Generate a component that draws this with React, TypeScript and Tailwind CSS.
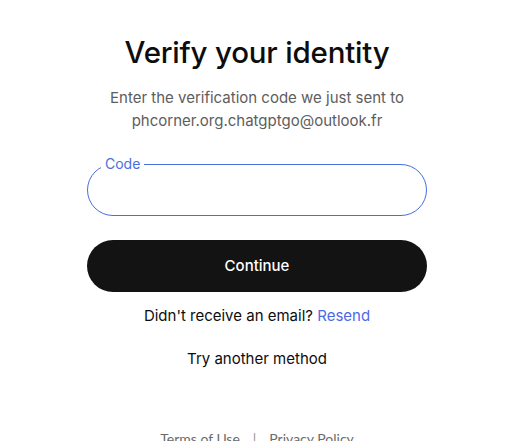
export default function App() {
  return (
    <div className="h-[441px] bg-white pl-[6px] font-['Inter',sans-serif] text-[#0d0d0d] flex flex-col items-center overflow-hidden">
      <h1 className="mt-[34px] text-[29.5px] leading-[36px] font-medium tracking-[-0.2px]">
        Verify your identity
      </h1>
      <p className="mt-[16px] text-center text-[15px] leading-[23px] text-[#5d5d5d]">
        Enter the verification code we just sent to
        <br />
        phcorner.org.chatgptgo@outlook.fr
      </p>

      <div className="relative mt-[32px] w-[340px] h-[52px] shrink-0 rounded-full border border-[#4a6ee0]">
        <span className="absolute left-[13px] -top-[9px] bg-white px-[4px] text-[14px] leading-[16px] text-[#4a6ee0]">
          Code
        </span>
      </div>

      <button
        type="button"
        className="mt-[24px] w-[340px] h-[52px] shrink-0 rounded-full bg-[#131313] text-white text-[15px] font-medium"
      >
        Continue
      </button>

      <p className="mt-[14px] text-[15px] leading-[20px]">
        Didn't receive an email? <span className="text-[#4e6ae6]">Resend</span>
      </p>

      <p className="mt-[23px] text-[15px] leading-[20px]">Try another method</p>

      <div className="mt-[60px] shrink-0 flex items-center gap-[13px] font-['Lato',sans-serif] text-[14px] leading-[20px] text-[#6b6b6b]">
        <span>Terms of Use</span>
        <span className="text-[#8f8f8f]">|</span>
        <span>Privacy Policy</span>
      </div>
    </div>
  );
}
